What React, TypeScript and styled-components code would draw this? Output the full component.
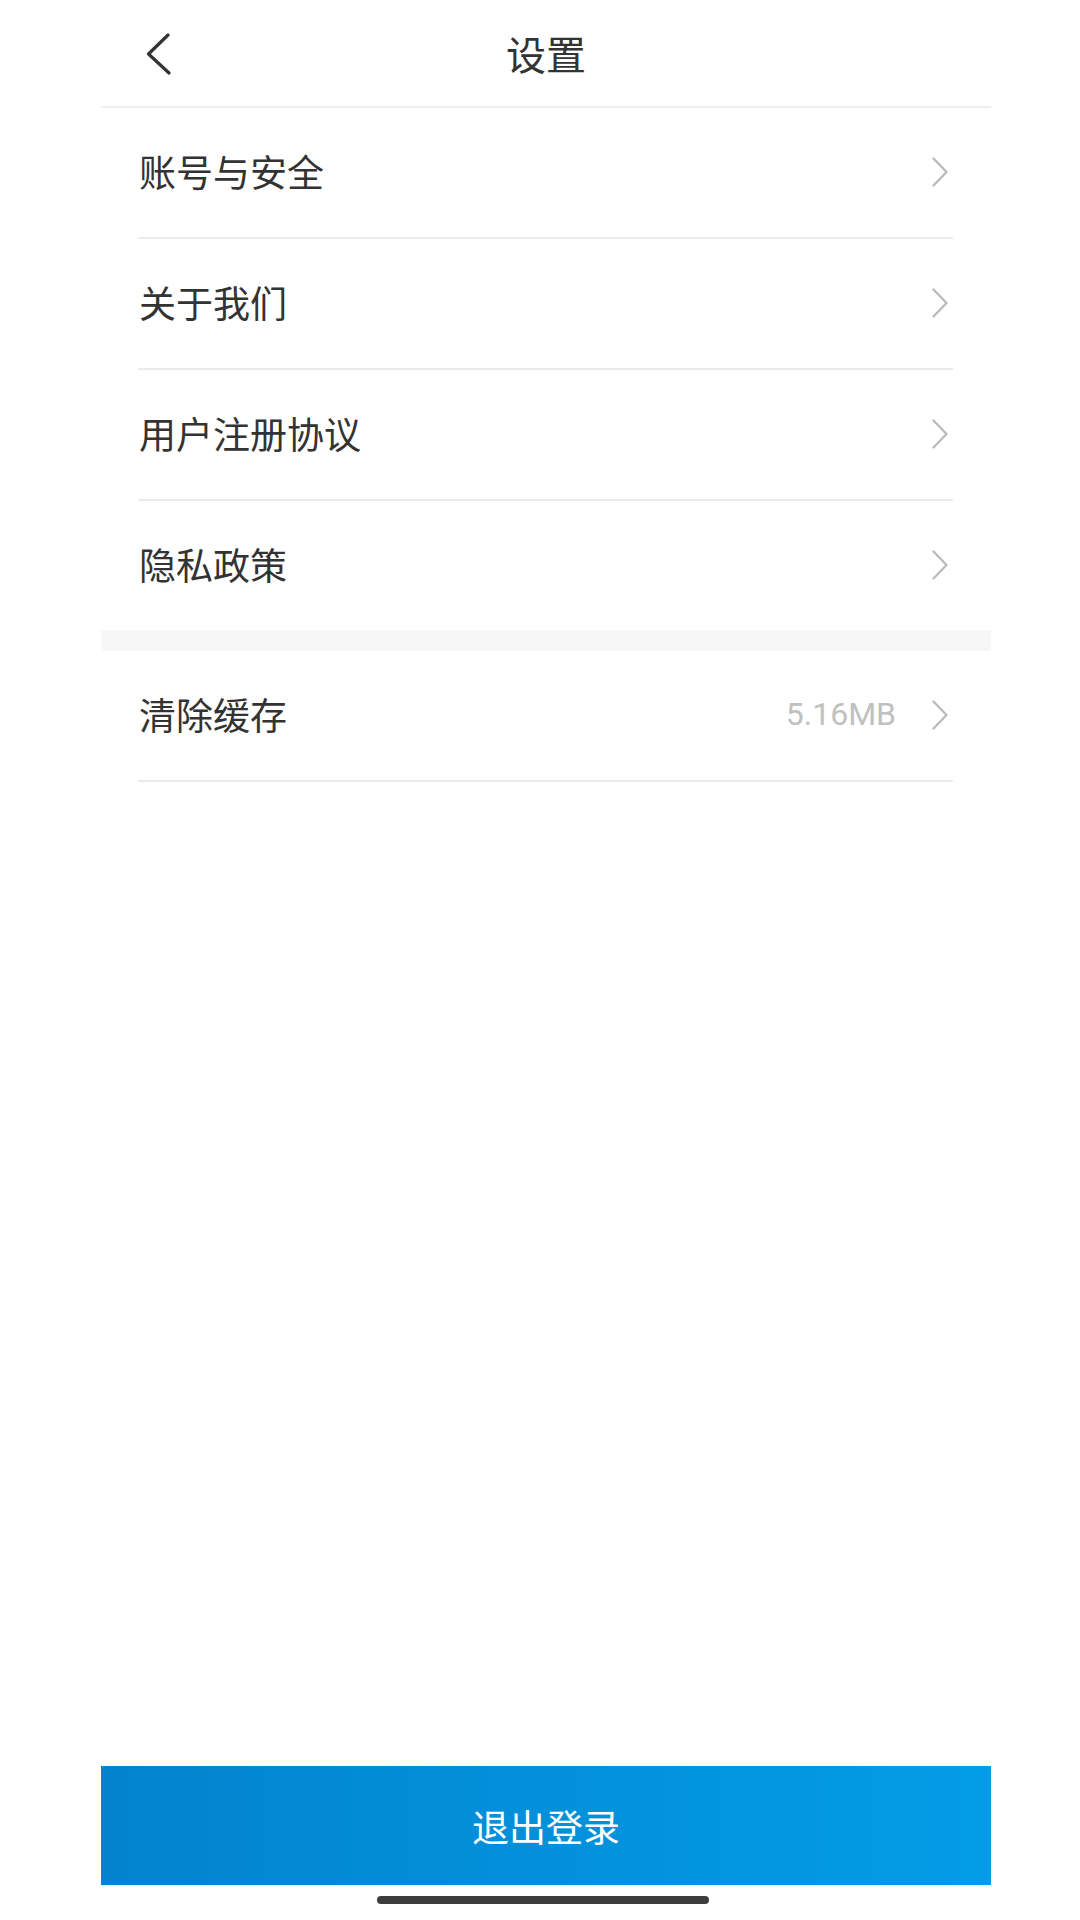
import React from "react";
import styled, { createGlobalStyle } from "styled-components";

const GlobalStyle = createGlobalStyle`
  html, body {
    margin: 0;
    padding: 0;
    background: #ffffff;
  }
  body {
    font-family: "Noto Sans CJK SC", "Noto Sans", sans-serif;
    color: #333333;
  }
`;

const Page = styled.div`
  width: 890px;
  margin-left: 101px;
  min-height: 1920px;
  display: flex;
  flex-direction: column;
`;

const Header = styled.header`
  height: 106px;
  border-bottom: 2px solid #eeeeee;
  display: grid;
  grid-template-columns: 1fr auto 1fr;
  align-items: center;
`;

const BackButton = styled.button`
  justify-self: start;
  margin-left: 45px;
  margin-top: 2px;
  padding: 0;
  border: none;
  background: none;
  display: flex;
  cursor: pointer;
`;

const Title = styled.h1`
  margin: 0;
  font-size: 40px;
  font-weight: 400;
  color: #333333;
  line-height: 1;
`;

const Group = styled.ul`
  list-style: none;
  margin: 0;
  padding: 0;
`;

const Row = styled.li<{ $last?: boolean }>`
  height: 129px;
  margin: 0 38px 0 37px;
  border-bottom: ${(p) => (p.$last ? "none" : "2px solid #ebebeb")};
  display: flex;
  align-items: center;
`;

const Label = styled.span`
  flex: 1;
  font-size: 37px;
  color: #333333;
  padding-left: 1px;
  padding-bottom: 4px;
`;

const Value = styled.span`
  font-family: Roboto, "Noto Sans", sans-serif;
  font-size: 32px;
  color: #c0c0c0;
  margin-right: 36px;
  padding-bottom: 4px;
`;

const ArrowWrap = styled.span`
  display: flex;
  margin-right: 5px;
  padding-bottom: 2px;
`;

const Band = styled.div`
  height: 21px;
  background: #f7f7f7;
`;

const Spacer = styled.div`
  flex: 1;
`;

const LogoutButton = styled.button`
  height: 119px;
  border: none;
  padding: 0;
  background: linear-gradient(90deg, #0383cd 0%, #0390db 50%, #039ce6 100%);
  color: #ffffff;
  font-family: "Noto Sans CJK SC", "Noto Sans", sans-serif;
  font-size: 37px;
  cursor: pointer;
`;

const HomeBar = styled.div`
  width: 332px;
  height: 8px;
  border-radius: 4px;
  background: #3d3d3d;
  margin: 11px auto 16px;
  position: relative;
  left: -3px;
`;

const Arrow = () => (
  <svg width="16" height="30" viewBox="0 0 16 30">
    <polyline
      points="1.5,1.5 14.5,15 1.5,28.5"
      fill="none"
      stroke="#bbbbbb"
      strokeWidth="2.4"
      strokeLinecap="round"
      strokeLinejoin="round"
    />
  </svg>
);

const items = ["账号与安全", "关于我们", "用户注册协议", "隐私政策"];

const App = () => {
  return (
    <>
      <GlobalStyle />
      <Page>
        <Header>
          <BackButton aria-label="返回">
            <svg width="25" height="42" viewBox="0 0 25 42">
              <polyline
                points="22,2 2.5,21 23,40"
                fill="none"
                stroke="#333333"
                strokeWidth="3.2"
                strokeLinecap="round"
                strokeLinejoin="round"
              />
            </svg>
          </BackButton>
          <Title>设置</Title>
          <div />
        </Header>

        <Group>
          {items.map((item, i) => (
            <Row key={item} $last={i === items.length - 1}>
              <Label>{item}</Label>
              <ArrowWrap>
                <Arrow />
              </ArrowWrap>
            </Row>
          ))}
        </Group>

        <Band />

        <Group>
          <Row>
            <Label>清除缓存</Label>
            <Value>5.16MB</Value>
            <ArrowWrap>
              <Arrow />
            </ArrowWrap>
          </Row>
        </Group>

        <Spacer />

        <LogoutButton>退出登录</LogoutButton>
        <HomeBar />
      </Page>
    </>
  );
};

export default App;
